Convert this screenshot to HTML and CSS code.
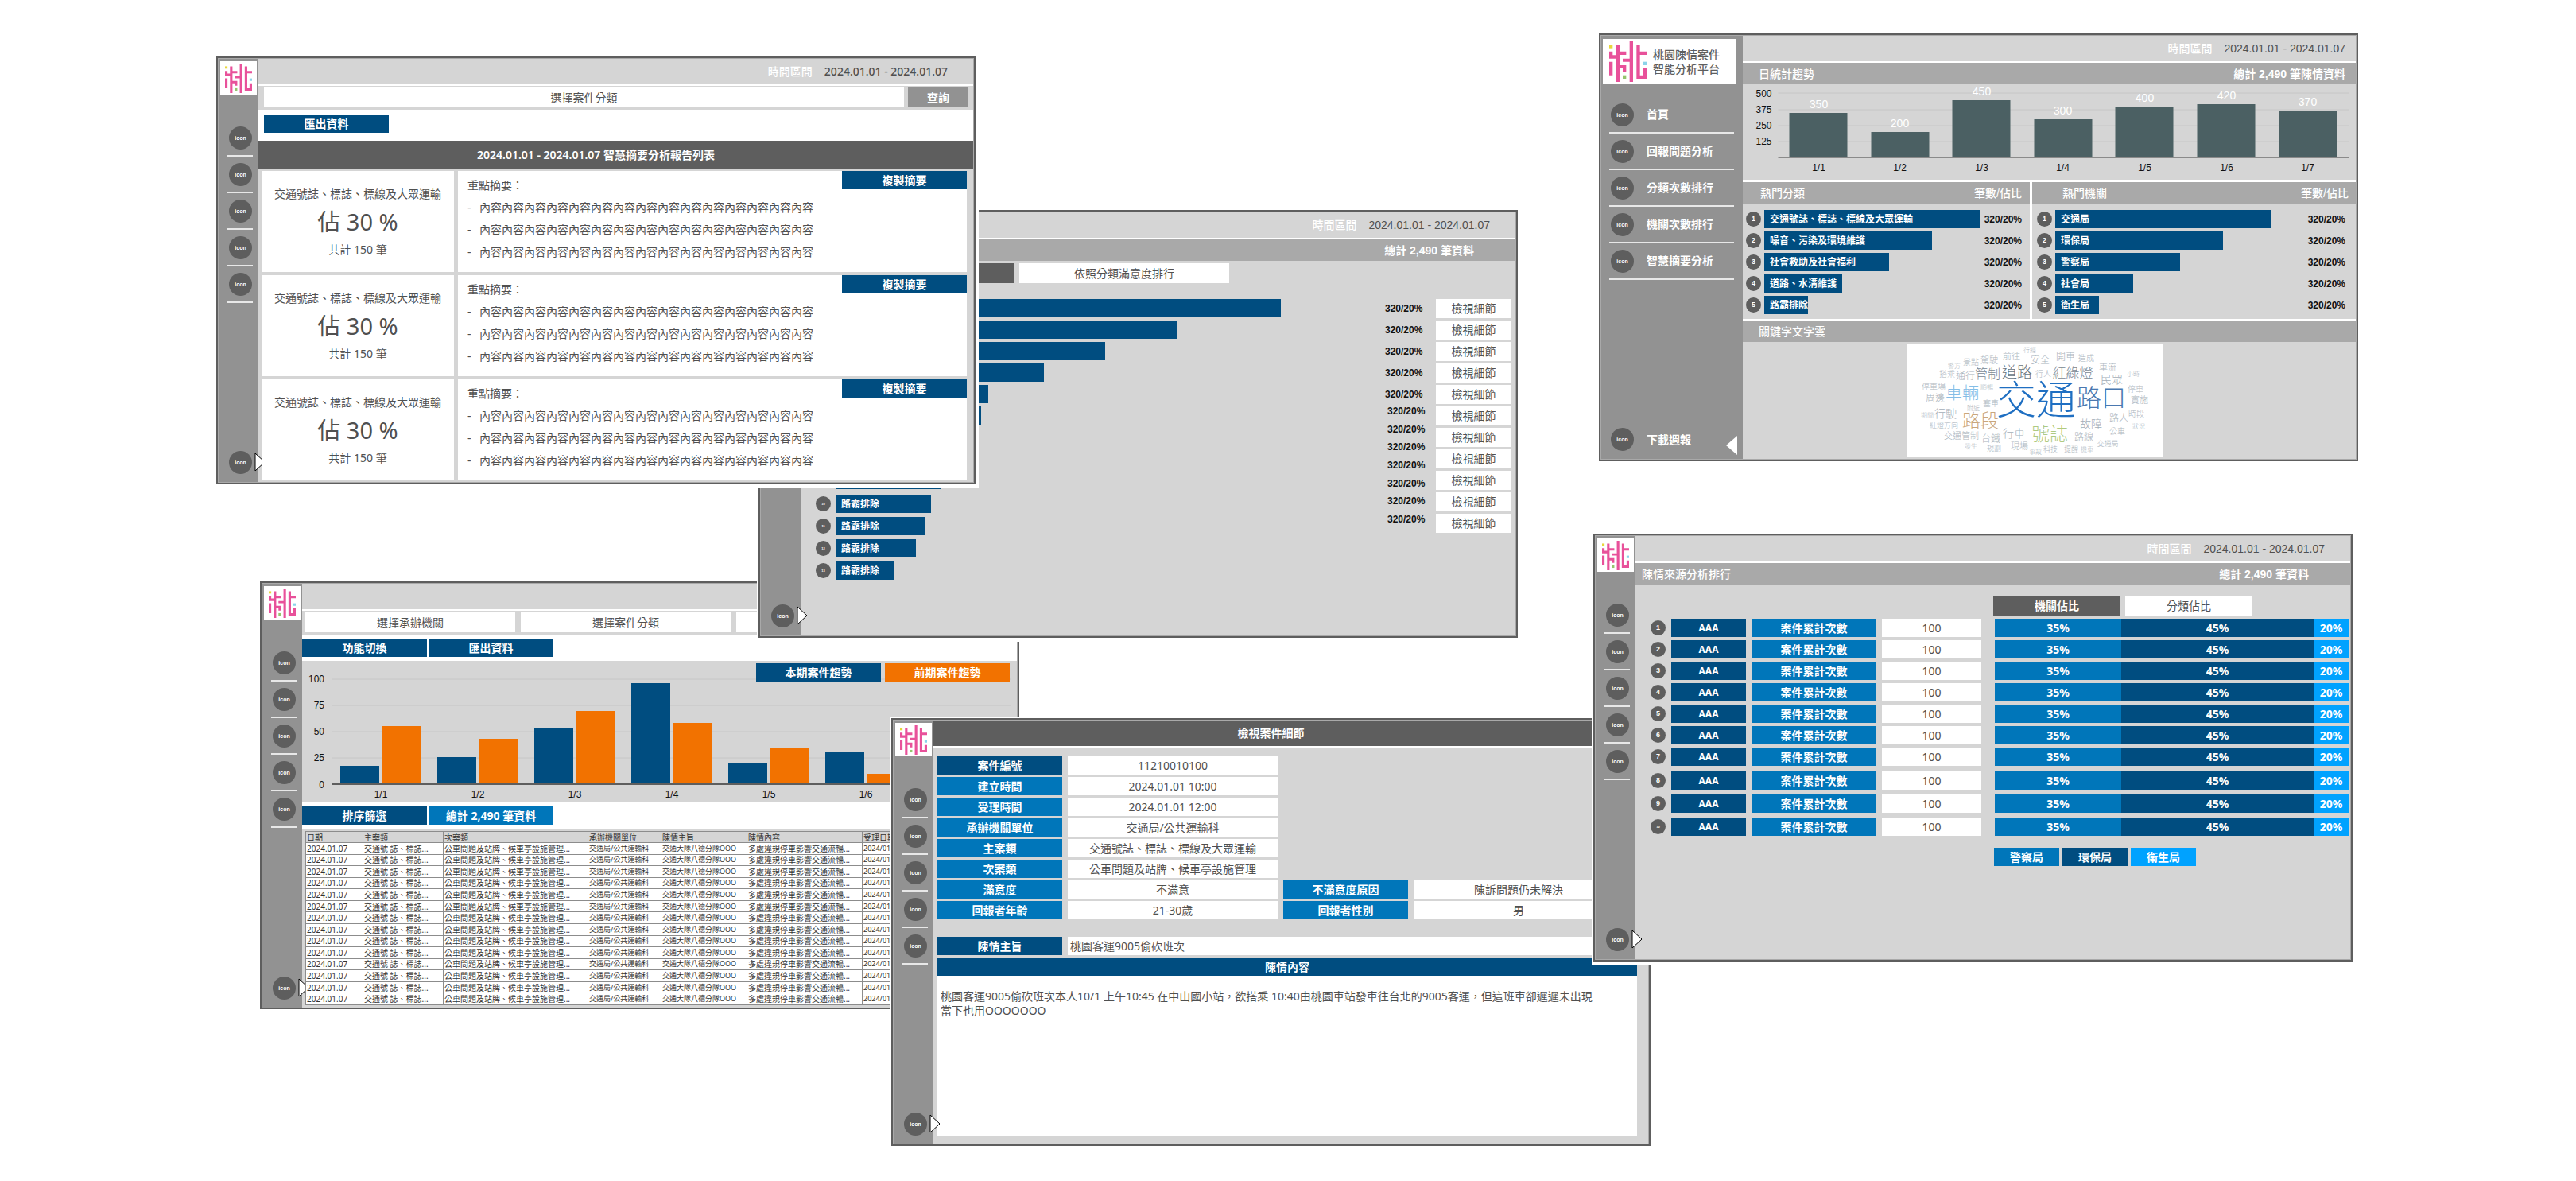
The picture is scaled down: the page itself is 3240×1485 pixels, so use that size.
FILE: index.html
```html
<!DOCTYPE html>
<html lang="zh-Hant">
<head>
<meta charset="utf-8">
<meta name="viewport" content="width=device-width, initial-scale=1">
<title>桃園陳情案件智能分析平台</title>
<link rel="stylesheet" href="styles.css">
</head>
<body>
<svg class="defs" aria-hidden="true">
  <symbol id="logo" viewBox="12 10 141 153">
    <path fill="#e8d63c" d="M12 24h13v12H12z"/>
    <path fill="#8bd3ea" d="M140 87h13v13h-13z"/>
    <path fill="#94c56e" d="M63 138h13v13H63z"/>
    <path fill="#e8519a" d="M12 48h13v14h13V24h13v24h25v13H51v39h25v25H63v-13H51v51H38V75H12zM12 87h13v51H12zM89 10h13v153H89V87H63V75h26zM115 24h13v24h25v13h-25v77h12v-26h13v39h-38z"/>
  </symbol>
  <symbol id="arrow-right" viewBox="0 0 14 24">
    <path fill="#fff" stroke="#000" d="M1 1v22L13 12z"/>
  </symbol>
  <symbol id="arrow-left" viewBox="0 0 14 24">
    <path fill="#fff" d="M14 0v24L0 12z"/>
  </symbol>
</svg>

<main class="desk">

<!-- 案件趨勢 -->
<section class="window win-trend">
  <aside class="side">
    <div class="brand"><svg class="logo"><use href="#logo"/></svg></div>
    <nav class="nav"><a href="#"><i>icon</i></a><a href="#"><i>icon</i></a><a href="#"><i>icon</i></a><a href="#"><i>icon</i></a><a href="#"><i>icon</i></a></nav>
    <a class="download" href="#"><i>icon</i></a>
    <button class="toggle" aria-label="展開選單"><svg><use href="#arrow-right"/></svg></button>
  </aside>
  <div class="main">
    <header class="head"></header>
    <form class="filters filters-3">
      <select aria-label="承辦機關"><option>選擇承辦機關</option></select>
      <select aria-label="案件分類"><option>選擇案件分類</option></select>
      <select aria-label="案件狀態"><option>選擇案件狀態</option></select>
    </form>
    <div class="actions"><button class="btn navy">功能切換</button><button class="btn navy">匯出資料</button></div>
    <div class="trend">
      <svg class="trend-chart" viewBox="0 0 899 178">
        <path class="grid" d="M37 23h855M37 56h855M37 89h855M37 122h855"/>
        <g class="series-now">
          <rect x="48" y="132" width="49" height="23"/><rect x="170" y="121" width="49" height="34"/><rect x="292" y="85" width="49" height="70"/><rect x="414" y="28" width="49" height="127"/><rect x="536" y="128" width="49" height="27"/><rect x="658" y="115" width="49" height="40"/>
        </g>
        <g class="series-prev">
          <rect x="101" y="82" width="49" height="73"/><rect x="223" y="98" width="49" height="57"/><rect x="345" y="63" width="49" height="92"/><rect x="467" y="78" width="49" height="77"/><rect x="589" y="110" width="49" height="45"/><rect x="711" y="142" width="49" height="13"/>
        </g>
        <path class="axis dark-line" d="M37 155h855"/>
        <g class="ticks end"><text x="28" y="27">100</text><text x="28" y="60">75</text><text x="28" y="93">50</text><text x="28" y="126">25</text><text x="28" y="160">0</text></g>
        <g class="ticks mid"><text x="99" y="172">1/1</text><text x="221" y="172">1/2</text><text x="343" y="172">1/3</text><text x="465" y="172">1/4</text><text x="587" y="172">1/5</text><text x="709" y="172">1/6</text></g>
      </svg>
      <div class="trend-legend"><button class="btn navy">本期案件趨勢</button><button class="btn orange">前期案件趨勢</button></div>
    </div>
    <div class="actions"><button class="btn navy">排序篩選</button><button class="btn blue">總計 2,490 筆資料</button></div>
    <div class="records-wrap">
      <table class="records">
        <colgroup><col class="c1"><col class="c2"><col class="c3"><col class="c4"><col class="c5"><col class="c6"><col></colgroup>
        <thead><tr><th>日期</th><th>主案類</th><th>次案類</th><th>承辦機關單位</th><th>陳情主旨</th><th>陳情內容</th><th>受理日期</th></tr></thead>
        <tbody>
          <tr><td>2024.01.07</td><td>交通號 誌、標誌...</td><td>公車問題及站牌、候車亭設施管理...</td><td>交通局/公共運輸科</td><td>交通大隊八德分隊OOO</td><td>多處違規停車影響交通流暢...</td><td>2024/01/07</td></tr>
          <tr><td>2024.01.07</td><td>交通號 誌、標誌...</td><td>公車問題及站牌、候車亭設施管理...</td><td>交通局/公共運輸科</td><td>交通大隊八德分隊OOO</td><td>多處違規停車影響交通流暢...</td><td>2024/01/07</td></tr>
          <tr><td>2024.01.07</td><td>交通號 誌、標誌...</td><td>公車問題及站牌、候車亭設施管理...</td><td>交通局/公共運輸科</td><td>交通大隊八德分隊OOO</td><td>多處違規停車影響交通流暢...</td><td>2024/01/07</td></tr>
          <tr><td>2024.01.07</td><td>交通號 誌、標誌...</td><td>公車問題及站牌、候車亭設施管理...</td><td>交通局/公共運輸科</td><td>交通大隊八德分隊OOO</td><td>多處違規停車影響交通流暢...</td><td>2024/01/07</td></tr>
          <tr><td>2024.01.07</td><td>交通號 誌、標誌...</td><td>公車問題及站牌、候車亭設施管理...</td><td>交通局/公共運輸科</td><td>交通大隊八德分隊OOO</td><td>多處違規停車影響交通流暢...</td><td>2024/01/07</td></tr>
          <tr><td>2024.01.07</td><td>交通號 誌、標誌...</td><td>公車問題及站牌、候車亭設施管理...</td><td>交通局/公共運輸科</td><td>交通大隊八德分隊OOO</td><td>多處違規停車影響交通流暢...</td><td>2024/01/07</td></tr>
          <tr><td>2024.01.07</td><td>交通號 誌、標誌...</td><td>公車問題及站牌、候車亭設施管理...</td><td>交通局/公共運輸科</td><td>交通大隊八德分隊OOO</td><td>多處違規停車影響交通流暢...</td><td>2024/01/07</td></tr>
          <tr><td>2024.01.07</td><td>交通號 誌、標誌...</td><td>公車問題及站牌、候車亭設施管理...</td><td>交通局/公共運輸科</td><td>交通大隊八德分隊OOO</td><td>多處違規停車影響交通流暢...</td><td>2024/01/07</td></tr>
          <tr><td>2024.01.07</td><td>交通號 誌、標誌...</td><td>公車問題及站牌、候車亭設施管理...</td><td>交通局/公共運輸科</td><td>交通大隊八德分隊OOO</td><td>多處違規停車影響交通流暢...</td><td>2024/01/07</td></tr>
          <tr><td>2024.01.07</td><td>交通號 誌、標誌...</td><td>公車問題及站牌、候車亭設施管理...</td><td>交通局/公共運輸科</td><td>交通大隊八德分隊OOO</td><td>多處違規停車影響交通流暢...</td><td>2024/01/07</td></tr>
          <tr><td>2024.01.07</td><td>交通號 誌、標誌...</td><td>公車問題及站牌、候車亭設施管理...</td><td>交通局/公共運輸科</td><td>交通大隊八德分隊OOO</td><td>多處違規停車影響交通流暢...</td><td>2024/01/07</td></tr>
          <tr><td>2024.01.07</td><td>交通號 誌、標誌...</td><td>公車問題及站牌、候車亭設施管理...</td><td>交通局/公共運輸科</td><td>交通大隊八德分隊OOO</td><td>多處違規停車影響交通流暢...</td><td>2024/01/07</td></tr>
          <tr><td>2024.01.07</td><td>交通號 誌、標誌...</td><td>公車問題及站牌、候車亭設施管理...</td><td>交通局/公共運輸科</td><td>交通大隊八德分隊OOO</td><td>多處違規停車影響交通流暢...</td><td>2024/01/07</td></tr>
          <tr><td>2024.01.07</td><td>交通號 誌、標誌...</td><td>公車問題及站牌、候車亭設施管理...</td><td>交通局/公共運輸科</td><td>交通大隊八德分隊OOO</td><td>多處違規停車影響交通流暢...</td><td>2024/01/07</td></tr>
        </tbody>
      </table>
    </div>
  </div>
</section>

<!-- 滿意度排行 -->
<section class="window win-rank">
  <aside class="side">
    <div class="brand"><svg class="logo"><use href="#logo"/></svg></div>
    <a class="download" href="#"><i>icon</i></a>
    <button class="toggle" aria-label="展開選單"><svg><use href="#arrow-right"/></svg></button>
  </aside>
  <div class="main">
    <header class="head sans"><b>時間區間</b><span>2024.01.01 - 2024.01.07</span></header>
    <div class="bar sans"><span></span><strong>總計 2,490 筆資料</strong></div>
    <div class="tabs"><button class="tab on" aria-label="依照機關滿意度排行"></button><button class="tab">依照分類滿意度排行</button></div>
    <div class="rank">
      <div class="rank-bars">
        <ol class="bars">
          <li><i></i><span style="width:559px"></span></li>
          <li><i></i><span style="width:429px"></span></li>
          <li><i></i><span style="width:338px"></span></li>
          <li><i></i><span style="width:261px"></span></li>
          <li><i></i><span style="width:191px"></span></li>
          <li><i></i><span style="width:182px"></span></li>
          <li><i></i><span style="width:170px"></span></li>
          <li><i></i><span style="width:150px"></span></li>
          <li><i></i><span style="width:131px"></span></li>
        </ol>
        <ol class="bars tail">
          <li><i>10</i><span style="width:119px">路霸排除</span></li>
          <li><i>11</i><span style="width:112px">路霸排除</span></li>
          <li><i>12</i><span style="width:100px">路霸排除</span></li>
          <li><i>13</i><span style="width:73px">路霸排除</span></li>
        </ol>
      </div>
      <div class="rank-counts">
        <ul><li>320/20%</li><li>320/20%</li><li>320/20%</li><li>320/20%</li><li>320/20%</li></ul>
        <ul class="tail"><li>320/20%</li><li>320/20%</li><li>320/20%</li><li>320/20%</li><li>320/20%</li><li>320/20%</li><li>320/20%</li></ul>
      </div>
      <div class="rank-links">
        <button>檢視細節</button><button>檢視細節</button><button>檢視細節</button><button>檢視細節</button><button>檢視細節</button><button>檢視細節</button><button>檢視細節</button><button>檢視細節</button><button>檢視細節</button><button>檢視細節</button><button>檢視細節</button>
      </div>
    </div>
  </div>
</section>

<!-- 智慧摘要 -->
<section class="window win-summary">
  <aside class="side">
    <div class="brand"><svg class="logo"><use href="#logo"/></svg></div>
    <nav class="nav"><a href="#"><i>icon</i></a><a href="#"><i>icon</i></a><a href="#"><i>icon</i></a><a href="#"><i>icon</i></a><a href="#"><i>icon</i></a></nav>
    <a class="download" href="#"><i>icon</i></a>
    <button class="toggle" aria-label="展開選單"><svg><use href="#arrow-right"/></svg></button>
  </aside>
  <div class="main">
    <header class="head"><b>時間區間</b><span>2024.01.01 - 2024.01.07</span></header>
    <form class="filters filters-1">
      <select aria-label="案件分類"><option>選擇案件分類</option></select>
      <button class="btn gray" type="button">查詢</button>
    </form>
    <div class="actions roomy"><button class="btn navy">匯出資料</button></div>
    <h2 class="band">2024.01.01 - 2024.01.07 智慧摘要分析報告列表</h2>
    <div class="cards">
      <article class="card">
        <div class="share"><p>交通號誌、標誌、標線及大眾運輸</p><strong>佔 30 %</strong><p>共計 150 筆</p></div>
        <div class="digest"><h3>重點摘要：</h3><ul><li>內容內容內容內容內容內容內容內容內容內容內容內容內容內容內容</li><li>內容內容內容內容內容內容內容內容內容內容內容內容內容內容內容</li><li>內容內容內容內容內容內容內容內容內容內容內容內容內容內容內容</li></ul><button class="btn navy">複製摘要</button></div>
      </article>
      <article class="card">
        <div class="share"><p>交通號誌、標誌、標線及大眾運輸</p><strong>佔 30 %</strong><p>共計 150 筆</p></div>
        <div class="digest"><h3>重點摘要：</h3><ul><li>內容內容內容內容內容內容內容內容內容內容內容內容內容內容內容</li><li>內容內容內容內容內容內容內容內容內容內容內容內容內容內容內容</li><li>內容內容內容內容內容內容內容內容內容內容內容內容內容內容內容</li></ul><button class="btn navy">複製摘要</button></div>
      </article>
      <article class="card">
        <div class="share"><p>交通號誌、標誌、標線及大眾運輸</p><strong>佔 30 %</strong><p>共計 150 筆</p></div>
        <div class="digest"><h3>重點摘要：</h3><ul><li>內容內容內容內容內容內容內容內容內容內容內容內容內容內容內容</li><li>內容內容內容內容內容內容內容內容內容內容內容內容內容內容內容</li><li>內容內容內容內容內容內容內容內容內容內容內容內容內容內容內容</li></ul><button class="btn navy">複製摘要</button></div>
      </article>
    </div>
  </div>
</section>

<!-- 檢視案件細節 -->
<section class="window win-detail">
  <aside class="side">
    <div class="brand"><svg class="logo"><use href="#logo"/></svg></div>
    <nav class="nav"><a href="#"><i>icon</i></a><a href="#"><i>icon</i></a><a href="#"><i>icon</i></a><a href="#"><i>icon</i></a><a href="#"><i>icon</i></a></nav>
    <a class="download" href="#"><i>icon</i></a>
    <button class="toggle" aria-label="展開選單"><svg><use href="#arrow-right"/></svg></button>
  </aside>
  <div class="main">
    <header class="head dark"><h2>檢視案件細節</h2></header>
    <div class="detail">
      <dl class="fields">
        <dt class="first navy">案件編號</dt><dd>11210010100</dd>
        <dt class="first">建立時間</dt><dd>2024.01.01 10:00</dd>
        <dt class="first">受理時間</dt><dd>2024.01.01 12:00</dd>
        <dt class="first">承辦機關單位</dt><dd>交通局/公共運輸科</dd>
        <dt class="first">主案類</dt><dd>交通號誌、標誌、標線及大眾運輸</dd>
        <dt class="first">次案類</dt><dd>公車問題及站牌、候車亭設施管理</dd>
        <dt class="first">滿意度</dt><dd>不滿意</dd><dt>不滿意度原因</dt><dd>陳訴問題仍未解決</dd>
        <dt class="first">回報者年齡</dt><dd>21-30歲</dd><dt>回報者性別</dt><dd>男</dd>
      </dl>
      <dl class="fields subject"><dt class="navy">陳情主旨</dt><dd>桃園客運9005偷砍班次</dd></dl>
      <h3>陳情內容</h3>
      <div class="body-text">桃園客運9005偷砍班次本人10/1 上午10:45 在中山國小站，欲搭乘 10:40由桃園車站發車往台北的9005客運，但這班車卻遲遲未出現<br>當下也用OOOOOOO</div>
    </div>
  </div>
</section>

<!-- 首頁 -->
<section class="window win-home">
  <aside class="side">
    <div class="brand"><svg class="logo"><use href="#logo"/></svg><h1>桃園陳情案件<br>智能分析平台</h1></div>
    <nav class="nav"><a href="#"><i>icon</i>首頁</a><a href="#"><i>icon</i>回報問題分析</a><a href="#"><i>icon</i>分類次數排行</a><a href="#"><i>icon</i>機關次數排行</a><a href="#"><i>icon</i>智慧摘要分析</a></nav>
    <a class="download" href="#"><i>icon</i>下載週報</a>
    <button class="toggle" aria-label="收合選單"><svg><use href="#arrow-left"/></svg></button>
  </aside>
  <div class="main">
    <header class="head sans"><b>時間區間</b><span>2024.01.01 - 2024.01.07</span></header>
    <div class="bar sans"><span>日統計趨勢</span><strong>總計 2,490 筆陳情資料</strong></div>
    <svg class="daily-chart" viewBox="0 0 770 120">
      <path class="grid" d="M44 11h718M44 32h718M44 52h718M44 72h718"/>
      <g class="series-day">
        <rect x="58" y="36" width="73" height="56"/><rect x="161" y="60" width="73" height="32"/><rect x="263" y="20" width="73" height="72"/><rect x="366" y="44" width="73" height="48"/><rect x="468" y="28" width="73" height="64"/><rect x="571" y="25" width="73" height="67"/><rect x="674" y="33" width="73" height="59"/>
      </g>
      <path class="axis" d="M44 92h718"/>
      <g class="values"><text x="95" y="30">350</text><text x="197" y="54">200</text><text x="300" y="14">450</text><text x="402" y="38">300</text><text x="505" y="22">400</text><text x="608" y="19">420</text><text x="710" y="27">370</text></g>
      <g class="ticks end"><text x="36" y="16">500</text><text x="36" y="36">375</text><text x="36" y="56">250</text><text x="36" y="76">125</text></g>
      <g class="ticks mid"><text x="95" y="109">1/1</text><text x="197" y="109">1/2</text><text x="300" y="109">1/3</text><text x="402" y="109">1/4</text><text x="505" y="109">1/5</text><text x="608" y="109">1/6</text><text x="710" y="109">1/7</text></g>
    </svg>
    <div class="tops">
      <div class="top top-a">
        <div class="bar sans"><span>熱門分類</span><span>筆數/佔比</span></div>
        <ol class="bars">
          <li><i>1</i><span style="width:271px">交通號誌、標誌、標線及大眾運輸</span><em>320/20%</em></li>
          <li><i>2</i><span style="width:211px">噪音、污染及環境維護</span><em>320/20%</em></li>
          <li><i>3</i><span style="width:157px">社會救助及社會福利</span><em>320/20%</em></li>
          <li><i>4</i><span style="width:98px">道路、水溝維護</span><em>320/20%</em></li>
          <li><i>5</i><span style="width:55px">路霸排除</span><em>320/20%</em></li>
        </ol>
      </div>
      <div class="top top-b">
        <div class="bar sans"><span>熱門機關</span><span>筆數/佔比</span></div>
        <ol class="bars">
          <li><i>1</i><span style="width:271px">交通局</span><em>320/20%</em></li>
          <li><i>2</i><span style="width:211px">環保局</span><em>320/20%</em></li>
          <li><i>3</i><span style="width:157px">警察局</span><em>320/20%</em></li>
          <li><i>4</i><span style="width:98px">社會局</span><em>320/20%</em></li>
          <li><i>5</i><span style="width:55px">衛生局</span><em>320/20%</em></li>
        </ol>
      </div>
    </div>
    <div class="bar sans"><span>關鍵字文字雲</span></div>
    <div class="cloud-wrap">
      <svg class="cloud" viewBox="0 0 322 143">
        <g font-size="50" fill="#1f6fc2"><text x="163" y="89">交通</text></g>
        <g font-size="31" fill="#4a78b0"><text x="245" y="79">路口</text></g>
        <g font-size="23" fill="#aeca82"><text x="180" y="122">號誌</text></g>
        <g font-size="23" fill="#c9a67e"><text x="93" y="105">路段</text></g>
        <g font-size="21" fill="#84bde6"><text x="70" y="69">車輛</text></g>
        <g font-size="19" fill="#66747f"><text x="139" y="43">道路</text></g>
        <g font-size="17" fill="#7a8894"><text x="209" y="43">紅綠燈</text></g>
        <g font-size="16" fill="#7a8894"><text x="102" y="44">管制</text></g>
        <g font-size="14" fill="#a3aeb8"><text x="232" y="106">故障</text><text x="258" y="50">民眾</text><text x="49" y="93">行駛</text><text x="135" y="118">行車</text></g>
        <g font-size="12" fill="#a8b2bb"><text x="267" y="98">路人</text><text x="223" y="122">路線</text><text x="168" y="25">安全</text><text x="200" y="21">開車</text><text x="74" y="45">通行</text><text x="106" y="124">台鐵</text><text x="36" y="73">周邊</text></g>
        <g font-size="11" fill="#acb5be"><text x="132" y="20">前往</text><text x="104" y="25">駕駛</text><text x="253" y="34">車流</text><text x="69" y="120">交通管制</text><text x="142" y="133">現場</text><text x="293" y="75">實施</text></g>
        <g font-size="10" fill="#acb5be"><text x="226" y="22">造成</text><text x="81" y="27">景點</text><text x="51" y="42">搭乘</text><text x="172" y="42">行人</text><text x="34" y="58">停車場</text><text x="106" y="79">塞車</text><text x="288" y="61">停車</text><text x="265" y="114">公車</text><text x="289" y="92">時段</text></g>
        <g font-size="9" fill="#acb5be"><text x="47" y="106">紅燈方向</text><text x="110" y="135">規劃</text><text x="181" y="136">科技</text><text x="207" y="136">提醒</text><text x="253" y="129">交通局</text></g>
        <g font-size="8" fill="#acb5be"><text x="26" y="93">期間</text><text x="101" y="58">順暢</text><text x="155" y="11">行經</text><text x="60" y="31">警方</text><text x="285" y="41">小時</text><text x="84" y="84">附近</text><text x="81" y="132">發生</text><text x="162" y="139">事故</text><text x="227" y="136">機車</text><text x="292" y="107">狀況</text></g>
      </svg>
    </div>
  </div>
</section>

<!-- 陳情來源分析排行 -->
<section class="window win-source">
  <aside class="side">
    <div class="brand"><svg class="logo"><use href="#logo"/></svg></div>
    <nav class="nav"><a href="#"><i>icon</i></a><a href="#"><i>icon</i></a><a href="#"><i>icon</i></a><a href="#"><i>icon</i></a><a href="#"><i>icon</i></a></nav>
    <a class="download" href="#"><i>icon</i></a>
    <button class="toggle" aria-label="展開選單"><svg><use href="#arrow-right"/></svg></button>
  </aside>
  <div class="main">
    <header class="head sans"><b>時間區間</b><span>2024.01.01 - 2024.01.07</span></header>
    <div class="bar sans"><span>陳情來源分析排行</span><strong>總計 2,490 筆資料</strong></div>
    <div class="tabs"><button class="tab on">機關佔比</button><button class="tab">分類佔比</button></div>
    <ol class="sources">
      <li><i>1</i><b>AAA</b><b class="blue">案件累計次數</b><span>100</span><div class="stack"><b>35%</b><b>45%</b><b>20%</b></div></li>
      <li><i>2</i><b>AAA</b><b class="blue">案件累計次數</b><span>100</span><div class="stack"><b>35%</b><b>45%</b><b>20%</b></div></li>
      <li><i>3</i><b>AAA</b><b class="blue">案件累計次數</b><span>100</span><div class="stack"><b>35%</b><b>45%</b><b>20%</b></div></li>
      <li><i>4</i><b>AAA</b><b class="blue">案件累計次數</b><span>100</span><div class="stack"><b>35%</b><b>45%</b><b>20%</b></div></li>
      <li><i>5</i><b>AAA</b><b class="blue">案件累計次數</b><span>100</span><div class="stack"><b>35%</b><b>45%</b><b>20%</b></div></li>
      <li><i>6</i><b>AAA</b><b class="blue">案件累計次數</b><span>100</span><div class="stack"><b>35%</b><b>45%</b><b>20%</b></div></li>
      <li><i>7</i><b>AAA</b><b class="blue">案件累計次數</b><span>100</span><div class="stack"><b>35%</b><b>45%</b><b>20%</b></div></li>
    </ol>
    <ol class="sources tail">
      <li><i>8</i><b>AAA</b><b class="blue">案件累計次數</b><span>100</span><div class="stack"><b>35%</b><b>45%</b><b>20%</b></div></li>
      <li><i>9</i><b>AAA</b><b class="blue">案件累計次數</b><span>100</span><div class="stack"><b>35%</b><b>45%</b><b>20%</b></div></li>
      <li><i class="tiny">10</i><b>AAA</b><b class="blue">案件累計次數</b><span>100</span><div class="stack"><b>35%</b><b>45%</b><b>20%</b></div></li>
    </ol>
    <div class="source-legend"><b>警察局</b><b>環保局</b><b>衛生局</b></div>
  </div>
</section>

</main>
</body>
</html>
```
FILE: styles.css
```css
:root {
  --ink: #5e5e5e;
  --gray: #929292;
  --mid: #a9a9a9;
  --pale: #d5d5d5;
  --navy: #004d80;
  --blue: #0076ba;
  --sky: #00a2ff;
  --orange: #f27200;
  --text: "Noto Sans", "Noto Sans CJK TC", sans-serif;
  --sans: "Liberation Sans", "Noto Sans CJK TC", sans-serif;
}

* { box-sizing: border-box; }

body {
  margin: 0;
  background: #fff;
  color: #505050;
  font: 14px/20px var(--text);
}

h1, h2, h3, p, ul, ol, dl, dd { margin: 0; padding: 0; }
h1, h2, h3 { font-size: 14px; }
ul, ol { list-style: none; }
i, em { font-style: normal; }
a { color: inherit; text-decoration: none; }
button, select { margin: 0; padding: 0; border: 0; border-radius: 0; color: inherit; font: inherit; }
svg { display: block; }
.defs { position: absolute; width: 0; height: 0; }

.desk { position: relative; min-height: 1485px; }

/* windows */
.window {
  position: absolute;
  isolation: isolate;
  display: grid;
  grid-template-columns: 50px 1fr;
  width: 955px;
  height: 538px;
  padding: 1px;
  border: 2px solid var(--ink);
  background: var(--mid);
  box-shadow: 1px 2px 0 3px #fff;
}
.win-trend { left: 327px; top: 731px; }
.win-rank { left: 954px; top: 264px; }
.win-summary { left: 272px; top: 71px; }
.win-detail { left: 1121px; top: 903px; }
.win-home { left: 2011px; top: 42px; grid-template-columns: 178px 1fr; }
.win-source { left: 2004px; top: 671px; }

.main { display: flex; flex-direction: column; min-width: 0; background: var(--pale); }

/* sidebar */
.side {
  position: relative;
  z-index: 1;
  display: flex;
  flex-direction: column;
  justify-content: flex-start;
  padding: 3px 2px 10px;
  background: var(--gray);
  color: #fff;
  font-weight: 700;
}
.brand {
  display: flex;
  align-items: center;
  justify-content: center;
  height: 42px;
  margin-bottom: 32px;
  background: #fff;
  color: var(--ink);
}
.logo { width: 34px; height: 37px; }
.nav a, .download { display: flex; align-items: center; gap: 16px; margin: 0 5px 0 9px; padding-left: 2px; }
.nav a { height: 46px; border-bottom: 2px solid #e8e8e8; }
.nav i, .download i {
  flex: none;
  width: 29px;
  height: 29px;
  border-radius: 50%;
  background: var(--ink);
  font: 700 7px/29px var(--sans);
  text-align: center;
}
.side .download { margin-top: auto; }
.toggle { position: absolute; left: 45px; bottom: 13px; background: none; }
.toggle svg { width: 14px; height: 24px; }

.win-home .side { padding-top: 4px; }
.win-home .brand { justify-content: flex-start; gap: 8px; height: 57px; margin: 0 7px 16px 0; padding-left: 8px; }
.win-home .logo { width: 47px; height: 51px; }
.win-home h1 { font: 500 14px/18px var(--sans); }
.win-home .nav a { margin: 0 9px 0 8px; }
.win-home .download { margin: auto 9px 0 8px; }
.win-home .toggle { left: 157px; bottom: 5px; }

/* headers and captions */
.head {
  display: flex;
  align-items: center;
  justify-content: flex-end;
  gap: 15px;
  height: 34px;
  padding-right: 32px;
  border-bottom: 2px solid #fff;
}
.head b { color: #fff; font-weight: 500; }
.head span { font-weight: 500; }
.sans { font-family: var(--sans); }
.dark { justify-content: center; padding-right: 50px; background: var(--ink); color: #fff; }
.win-home .head { padding-right: 13px; }
.bar {
  display: flex;
  align-items: center;
  justify-content: space-between;
  height: 27px;
  padding: 0 52px 0 8px;
  background: var(--mid);
  color: #fff;
  font-weight: 500;
}
.win-home .bar { padding: 0 13px 0 20px; }

.btn { width: 157px; height: 23px; color: #fff; font-weight: 700; line-height: 23px; }
.navy { background: var(--navy); }
.blue { background: var(--blue); }
.orange { background: var(--orange); }
.gray { width: 76px; height: 25px; background: var(--gray); }

.filters { display: grid; height: 30px; padding: 2px 6px 3px 4px; }
.filters select { appearance: none; background: #fff; text-align-last: center; }
.filters-1 { grid-template-columns: 1fr 76px; gap: 5px; padding-left: 7px; }
.filters-3 { grid-template-columns: 264px 264px 264px; gap: 7px; }
.actions { display: flex; gap: 2px; padding: 5px 0; background: #fff; }
.roomy { padding: 6px 7px 10px; }

.tabs { display: flex; gap: 7px; padding: 3px 0 20px 4px; }
.tab { width: 264px; height: 25px; background: #fff; }
.tab.on { background: var(--ink); color: #fff; font-weight: 700; }

/* trend window */
.trend { position: relative; }
.trend-chart { width: 100%; height: 178px; }
.trend-legend { position: absolute; top: 3px; right: 9px; display: flex; gap: 5px; }
.grid { stroke: #c6c6c6; }
.axis { stroke: #8a8a8a; stroke-width: 2; }
.dark-line { stroke: #5e5e5e; }
.series-now { fill: var(--navy); }
.series-prev { fill: var(--orange); }
.series-day { fill: #4b6063; }
.ticks { fill: #111; font: 12px var(--sans); }
.values { fill: #fff; font: 14px var(--sans); text-anchor: middle; }
.end { text-anchor: end; }
.mid { text-anchor: middle; }

.records-wrap { flex: 1; padding: 3px; padding-left: 4px; }
.records {
  position: relative;
  z-index: 2;
  width: 100%;
  height: 219px;
  border-collapse: collapse;
  table-layout: fixed;
  background: #fff;
  color: #333;
  font-size: 10px;
  line-height: 12px;
}
.records th, .records td {
  height: 14px;
  padding: 0 1px;
  border: 1px solid #8c8c8c;
  font-weight: 400;
  text-align: left;
  white-space: nowrap;
  overflow: hidden;
}
.records th { background: var(--pale); }
.records td:nth-child(4), .records td:nth-child(5), .records td:nth-child(7) { font-size: 9px; }
.c1 { width: 72px; }
.c2 { width: 101px; }
.c3 { width: 182px; }
.c4 { width: 92px; }
.c5 { width: 108px; }
.c6 { width: 145px; }

/* horizontal bars */
.bars { display: grid; gap: 4px; }
.bars li { display: flex; align-items: center; gap: 7px; height: 23px; }
.bars i, .sources i {
  flex: none;
  width: 19px;
  height: 19px;
  border-radius: 50%;
  background: var(--ink);
  color: #fff;
  font: 700 9px/19px var(--sans);
  text-align: center;
}
.bars span {
  flex: none;
  height: 23px;
  padding-left: 6px;
  background: var(--navy);
  color: #fff;
  font-size: 12px;
  font-weight: 700;
  line-height: 23px;
  white-space: nowrap;
}
.bars em, .rank-counts { color: #111; font: 700 12px/18px var(--sans); }
.bars em { margin-left: auto; }

/* ranking window */
.rank { display: grid; grid-template-columns: 1fr 64px 95px; padding: 0 5px 0 19px; }
.rank-bars { display: grid; gap: 7px; align-content: start; }
.rank-bars .tail { gap: 5px; }
.rank-bars .tail i, .sources .tiny { font-size: 4px; }
.rank-counts ul:first-child { display: grid; gap: 3px; line-height: 24px; }
.rank-counts .tail { display: flex; flex-direction: column; justify-content: space-between; height: 154px; padding-left: 3px; }
.rank-links { display: grid; gap: 3px; align-content: start; }
.rank-links button { height: 24px; background: #fff; }

/* summary window */
.band { height: 35px; padding-right: 50px; background: var(--ink); color: #fff; font-weight: 600; line-height: 35px; text-align: center; }
.cards { position: relative; z-index: 2; display: grid; gap: 4px; padding: 3px 8px 0 0; margin-left: 4px; }
.card { display: grid; grid-template-columns: 242px 1fr; gap: 5px; height: 127px; }
.share, .digest { background: #fff; }
.share { display: flex; flex-direction: column; align-items: center; justify-content: center; gap: 8px; }
.share strong { font-size: 29px; font-weight: 400; line-height: 34px; }
.digest { position: relative; padding: 4px 12px; line-height: 28px; }
.digest h3 { font-weight: 400; }
.digest li { display: grid; grid-template-columns: 15px 1fr; }
.digest li::before { content: "-"; }
.digest .btn { position: absolute; top: 0; right: 0; }

/* detail window */
.detail { flex: 1; display: flex; flex-direction: column; padding: 11px 14px 10px 5px; }
.fields { display: grid; grid-template-columns: 157px 264px 157px 264px; gap: 3px 7px; line-height: 23px; text-align: center; }
.fields dt { background: var(--blue); color: #fff; font-weight: 700; }
.fields dt.first { grid-column: 1; }
.fields dt.navy { background: var(--navy); }
.fields dd { background: #fff; }
.subject { grid-template-columns: 157px 1fr; margin: 22px 0 3px; }
.subject dd { padding-left: 3px; text-align: left; }
.detail h3 { background: var(--navy); color: #fff; line-height: 23px; text-align: center; }
.body-text { flex: 1; padding: 17px 4px; background: #fff; line-height: 18px; }

/* home window */
.daily-chart { width: 100%; height: 120px; }
.tops { display: grid; grid-template-columns: 361px 1fr; column-gap: 3px; border: solid #fff; border-width: 3px 0 2px; background: #fff; }
.top { background: var(--pale); }
.top .bars { padding: 8px 10px 6px 4px; }
.top .bars li { gap: 4px; }
.top .bars span { padding-left: 7px; }
.win-home .top-a .bar { padding: 0 10px 0 22px; }
.win-home .top-b .bar { padding: 0 9px 0 38px; }
.win-home .top-b .bars { padding: 8px 13px 6px 6px; }
.cloud-wrap { padding: 2px 0 0 206px; }
.cloud { width: 322px; height: 143px; background: #fff; font-family: "Noto Sans CJK TC", sans-serif; font-weight: 300; text-anchor: middle; }

/* source window */
.win-source .tabs { gap: 6px; padding: 14px 0 4px 450px; }
.win-source .tab { width: 160px; }
.sources { display: grid; gap: 4px; padding-left: 19px; line-height: 23px; text-align: center; }
.sources.tail { gap: 6px; padding-top: 7px; }
.sources li { display: grid; grid-template-columns: 19px 94px 157px 125px 445px; column-gap: 7px; align-items: center; }
.sources li > b { height: 23px; background: var(--navy); color: #fff; }
.sources li > .blue { background: var(--blue); }
.sources li > b:nth-child(2) { font-size: 12px; }
.sources li > span { background: #fff; }
.stack { display: grid; grid-template-columns: 159px 242px 44px; margin-left: 10px; color: #fff; }
.stack b, .source-legend b { background: var(--blue); }
.stack b:nth-child(2), .source-legend b:nth-child(2) { background: var(--navy); }
.stack b:nth-child(3), .source-legend b:nth-child(3) { background: var(--sky); }
.source-legend { display: flex; gap: 4px; padding: 15px 0 0 451px; color: #fff; line-height: 23px; text-align: center; }
.source-legend b { width: 82px; }
```
